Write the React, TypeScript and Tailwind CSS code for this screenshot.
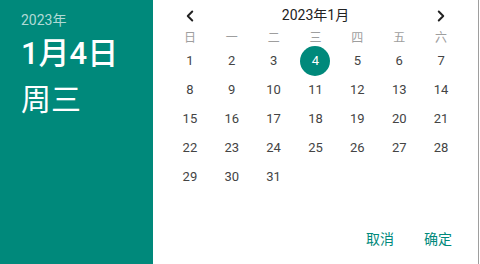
import { ChevronLeft, ChevronRight } from "lucide-react"

const weekdays = ["日", "一", "二", "三", "四", "五", "六"]
const selected = 4

function DayCell({ day }: { day: number | null }) {
    if (!day) return <div className="h-[29px]" />
    const active = day === selected
    return (
        <div className="h-[29px] flex justify-center items-center">
            <span className={`w-[30px] h-[30px] flex justify-center items-center rounded-full text-[13px] ${active ? "bg-[#00897b] text-white" : "text-[#444]"}`}>
                {day}
            </span>
        </div>
    )
}

function App() {
    const days: (number | null)[] = []
    for (let i = 1; i <= 31; i++) days.push(i)
    while (days.length < 35) days.push(null)

    return (
        <div className="w-[480px] h-[264px] flex bg-white font-['Roboto','Noto_Sans_CJK_SC',sans-serif]">

            <aside className="w-[153px] h-full bg-[#00897b] text-white pl-[21px] pt-[10px] flex flex-col">
                <p className="text-[14px] leading-[20px] text-white/70">2023年</p>
                <h2 className="text-[31px] leading-[40px] font-medium mt-[4px]">1月4日</h2>
                <h3 className="text-[30px] leading-[40px] mt-[6px]">周三</h3>
            </aside>

            <section className="flex-1 h-full flex flex-col px-4">
                <div className="h-[30px] flex justify-between items-center pt-[1px]">
                    <button className="w-[42px] h-full flex justify-center items-center text-[#222]">
                        <ChevronLeft size={18} strokeWidth={2.6} />
                    </button>
                    <h4 className="text-[14px] text-[#222]">2023年1月</h4>
                    <button className="w-[42px] h-full flex justify-center items-center text-[#222]">
                        <ChevronRight size={18} strokeWidth={2.6} />
                    </button>
                </div>

                <div className="grid grid-cols-7 h-[16px] items-center">
                    {weekdays.map((w) => (
                        <span key={w} className="text-center text-[12px] leading-[16px] text-[#9e9e9e]">{w}</span>
                    ))}
                </div>

                <div className="grid grid-cols-7">
                    {days.map((d, i) => <DayCell key={i} day={d} />)}
                </div>

                <div className="h-[28px] mt-[34px] pr-[2px] flex justify-end items-center gap-[14px]">
                    <button className="px-2 text-[14px] text-[#00897b]">取消</button>
                    <button className="px-2 text-[14px] text-[#00897b]">确定</button>
                </div>
            </section>

            <div className="w-px h-full bg-[#9e9e9e]" />
            <div className="w-px h-full bg-white" />
        </div>
    )
}

export default App
